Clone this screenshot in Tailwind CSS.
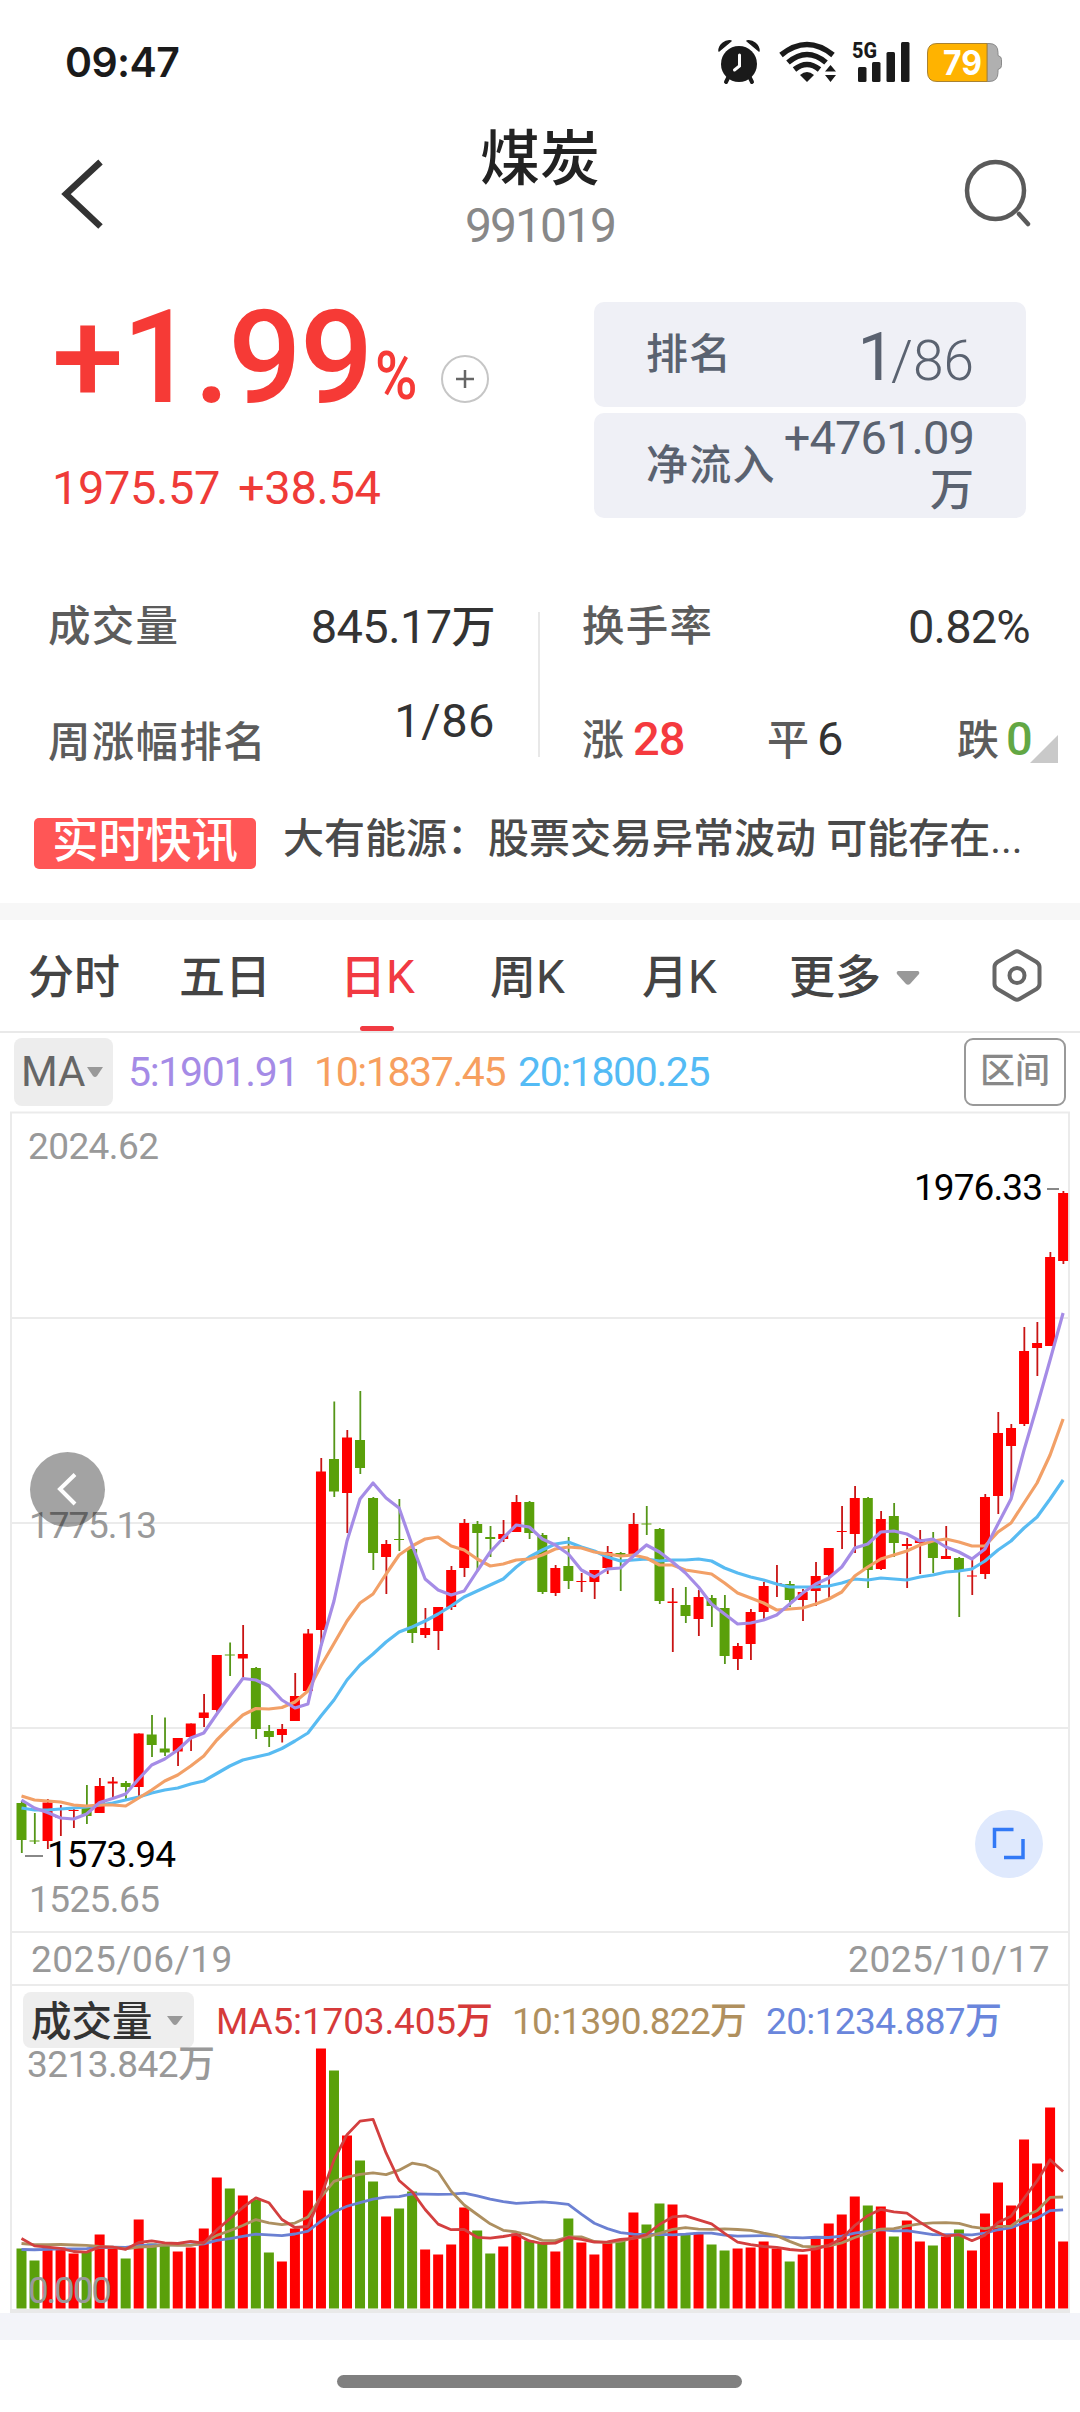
<!DOCTYPE html>
<html lang="zh-CN">

<head>
    <meta charset="UTF-8">
    <meta name="viewport" content="width=device-width, initial-scale=1.0">
    <title>煤炭 991019</title>
    <script src="https://cdn.jsdelivr.net/npm/@tailwindcss/browser@4"></script>
</head>

<body class="w-[1080px] h-[2412px] overflow-hidden bg-white font-['Roboto','Noto_Sans_CJK_SC',sans-serif] font-[450] text-[#333] whitespace-nowrap">
    <!-- status bar -->
    <div class="flex justify-between h-[120px] pl-[65px] pr-[70px] pt-[32px]">
        <span class="font-['Inter',sans-serif] font-semibold text-[41px] leading-[60px] text-[#1a1a1a] tracking-[-0.6px]">09:47</span>
        <svg class="w-[295px] h-[60px]" viewBox="715 32 295 60" fill="#1a1a1a">
            <circle cx="739" cy="64" r="18" />
            <path d="M719 51c0-6 6-11 12-10zM759 51c0-6-6-11-12-10z" stroke="#1a1a1a" stroke-width="1.5" stroke-linejoin="round" />
            <path d="M729 76l-3 6M749 76l3 6" stroke="#1a1a1a" stroke-width="4" stroke-linecap="round" />
            <path d="M739.500 55v11l-5 4" fill="none" stroke="#fff" stroke-width="3" stroke-linecap="round" />
            <g fill="none" stroke="#1a1a1a" stroke-width="5.500">
                <path d="M781 55q26-21 52 0" />
                <path d="M788 62.500q19-16 38 0" />
                <path d="M794.500 69.500q12.500-10 25 0" />
            </g>
            <path d="M800 75q7-6 14 0l-7 7z" />
            <path d="M825 71.500h11l-5.500-6.500zM825 75h11l-5.500 7z" />
            <text x="852" y="58" class="font-['Roboto']" font-size="22" font-weight="800" textLength="25" lengthAdjust="spacingAndGlyphs">5G</text>
            <rect x="858" y="67" width="8.500" height="15" rx="1.500" />
            <rect x="872" y="62" width="8.500" height="20" rx="1.500" />
            <rect x="886.500" y="52" width="8.500" height="30" rx="1.500" />
            <rect x="901" y="42" width="8.500" height="40" rx="1.500" />
            <path d="M987 43.500h2q9 0 9 9v3q3.500 1 3.500 4v6q0 3-3.500 4v3q0 9-9 9h-2z" fill="#b0b0b0" stroke="#8a8a8a" stroke-width="1" />
            <path d="M987 43.500h-50q-9.500 0-9.500 9.500v19q0 9.500 9.500 9.500h50z" fill="#ffb300" stroke="#a98232" stroke-width="1" />
            <text x="943" y="74.500" class="font-['Inter']" fill="#fff" font-size="34" font-weight="700" textLength="39" lengthAdjust="spacingAndGlyphs">79</text>
        </svg>
    </div>

    <!-- title -->
    <header class="flex justify-between h-[150px] pl-[60px] pr-[48px]">
        <svg class="w-[50px] h-[80px] mt-[34px]" viewBox="60 154 50 80" fill="none" stroke="#333" stroke-width="6.500">
            <path d="M100.500 162L66 194l34.500 32.500" />
        </svg>
        <div class="flex flex-col items-center pl-[8px]">
            <h1 class="mt-[7px] text-[60px] leading-[66px] font-medium text-[#222]">煤炭</h1>
            <span class="mt-[8px] text-[48px] leading-[50px] text-[#888] tracking-[-2px]">991019</span>
        </div>
        <svg class="w-[70px] h-[80px] mt-[34px]" viewBox="962 154 70 80" fill="none" stroke="#5a5a5a" stroke-width="4.500">
            <circle cx="995.500" cy="190.500" r="28.500" />
            <path d="M1019 214l9 10" stroke-linecap="round" />
        </svg>
    </header>

    <!-- quote -->
    <section class="flex justify-between h-[310px] pl-[52px] pr-[54px] pt-[32px]">
        <div>
            <div class="flex h-[106px] text-[#f63a36]">
                <span class="w-[321px] text-[129px] leading-[112px] font-medium tracking-[-1.5px]">+1.99</span>
                <span class="w-[54px] ml-[2px] text-[67px] leading-[148px] font-medium origin-left scale-x-[0.86]">%</span>
                <svg class="w-[50px] h-[50px] mt-[52px] ml-[11px]" viewBox="440 354 50 50" fill="none">
                    <circle cx="465" cy="379" r="23" stroke="#c6c6c6" stroke-width="2" />
                    <path d="M456 379h18M465 370v18" stroke="#666" stroke-width="2.500" />
                </svg>
            </div>
            <div class="mt-[55px] text-[47px] leading-[50px] text-[#ef3b38] tracking-[-0.4px] word-spacing-[6px]">1975.57<span class="ml-[18px]">+38.54</span></div>
        </div>
        <div class="flex flex-col gap-[6px] w-[432px] text-[#5a6270]">
            <div class="flex justify-between h-[105px] pl-[52px] pr-[52px] rounded-[10px] bg-[#eff0f6]">
                <span class="text-[42px] leading-[105px] tracking-[1px]">排名</span>
                <span class="flex"><b class="text-[67px] leading-[110px] font-normal tracking-[-4px]">1</b><i class="not-italic text-[55px] leading-[118px] font-light">/86</i></span>
            </div>
            <div class="flex justify-between h-[105px] pl-[52px] pr-[52px] rounded-[10px] bg-[#eff0f6]">
                <span class="text-[42px] leading-[105px] tracking-[1.2px]">净流入</span>
                <span class="text-[47px] leading-[50px] tracking-[-0.9px] text-right">+4761.09<br><span class="text-[44px] leading-[56px] tracking-normal">万</span></span>
            </div>
        </div>
    </section>

    <!-- stats -->
    <section class="flex h-[220px] pt-[20px] pl-[48px]">
        <div class="w-[490px] pr-[43px]">
            <div class="flex justify-between h-[50px] mt-[2px]">
                <span class="text-[42.500px] leading-[50px] tracking-[1.3px] text-[#5c5c5c]">成交量</span>
                <span class="text-[47px] leading-[50px] tracking-[-0.6px]">845.17<span class="text-[44px]">万</span></span>
            </div>
            <div class="flex justify-between h-[70px] mt-[44px]">
                <span class="mt-[22px] text-[42.500px] leading-[50px] tracking-[1.3px] text-[#5c5c5c]">周涨幅排名</span>
                <span class="text-[47px] leading-[50px] tracking-[0.5px]">1/86</span>
            </div>
        </div>
        <div class="w-[2px] h-[145px] mt-[12px] bg-[#e8e8e8]"></div>
        <div class="w-[518px] pl-[42px]">
            <div class="flex justify-between h-[50px] mt-[2px] pr-[28px]">
                <span class="text-[42.500px] leading-[50px] tracking-[1.3px] text-[#5c5c5c]">换手率</span>
                <span class="text-[47px] leading-[50px] tracking-[-0.8px]">0.82%</span>
            </div>
            <div class="flex h-[50px] mt-[62px] text-[42px] leading-[50px] text-[#5c5c5c]">
                <span class="w-[185px]">涨<b class="ml-[9px] text-[47px] font-medium tracking-[-1px] text-[#f53a3e]">28</b></span>
                <span class="w-[190px]">平<b class="ml-[8px] text-[47px] font-[450] text-[#333]">6</b></span>
                <span class="w-[73px]">跌<b class="ml-[7px] text-[47px] font-medium text-[#62a744]">0</b></span>
                <svg class="w-[28px] h-[28px] mt-[21px]" viewBox="0 0 28 28"><path d="M28 0v28H0z" fill="#c9c9c9" /></svg>
            </div>
        </div>
    </section>

    <!-- news -->
    <section class="flex h-[103px] pl-[34px] pt-[18px]">
        <span class="w-[222px] h-[51px] rounded-[5px] bg-[#ff5656] text-white text-center text-[46.500px] leading-[47px]">实时快讯</span>
        <span class="ml-[27px] text-[41px] leading-[42px] text-[#4a4a4a]">大有能源：股票交易异常波动 可能存在...</span>
    </section>
    <div class="h-[17px] bg-[#f7f7f7]"></div>

    <!-- period tabs -->
    <nav class="flex h-[113px] pl-[28px] border-b-2 border-[#e9e9e9] text-[46px] leading-[115px] text-[#444]">
        <span class="w-[151px]">分时</span>
        <span class="w-[161px]">五日</span>
        <span class="w-[150px] flex flex-col text-[#f13a42]">
            <span class="h-[106px]">日K</span>
            <span class="w-[34px] h-[5px] ml-[20px] rounded-[3px] bg-[#f13a42]"></span>
        </span>
        <span class="w-[152px]">周K</span>
        <span class="w-[147px]">月K</span>
        <span class="w-[107px]">更多</span>
        <svg class="w-[24px] h-[14px] mt-[51px]" viewBox="0 0 24 14"><path d="M2 0h20q2 1 1 3l-9 10q-2 1.500-4 0L1 3q-1-2 1-3z" fill="#999" /></svg>
        <svg class="w-[54px] h-[60px] mt-[26px] ml-[70px]" viewBox="0 0 54 60" fill="none" stroke="#666" stroke-width="4">
            <path d="M24.500 6q2.500-1.500 5 0l17 10q3 2 3 5v17q0 3-3 5l-17 10q-2.500 1.500-5 0l-17-10q-3-2-3-5V21q0-3 3-5z" />
            <circle cx="27" cy="29.500" r="7.500" />
        </svg>
    </nav>

    <!-- MA legend -->
    <div class="flex h-[78px] pl-[14px] pt-[5px] text-[41px] leading-[68px]">
        <div class="flex w-[99px] h-[68px] pl-[7px] rounded-[8px] bg-[#ededed] text-[42px] text-[#666]">MA
            <svg class="w-[16px] h-[11px] mt-[29px] ml-[2px]" viewBox="0 0 16 11"><path d="M0 0h16l-6 9q-2 2-4 0z" fill="#999" /></svg>
        </div>
        <span class="w-[186px] ml-[15px] tracking-[-1.3px] text-[#a58be6]">5:1901.91</span>
        <span class="w-[204px] tracking-[-1.4px] text-[#f79f5f]">10:1837.45</span>
        <span class="w-[446px] tracking-[-1.4px] text-[#54bbf5]">20:1800.25</span>
        <span class="w-[102px] h-[68px] border-2 border-[#999] rounded-[9px] text-center text-[35px] leading-[64px] text-[#888]">区间</span>
    </div>

    <!-- candles -->
    <div class="h-[820px]">
        <svg class="w-[1080px] h-[820px]" viewBox="0 1111 1080 820">
            <path d="M11 1931V1112.500H1069V1931M11 1318H1069M11 1523H1069M11 1728H1069" fill="none" stroke="#ebebeb" stroke-width="2" />
            <g id="candles"></g>
            <g fill="none" stroke-width="3.200" stroke-linejoin="round">
                <polyline id="ma20" stroke="#58bbf2" />
                <polyline id="ma10" stroke="#f2a067" />
                <polyline id="ma5" stroke="#a58ce6" />
            </g>
            <g font-size="37" fill="#999">
                <text x="28" y="1159" textLength="131">2024.62</text>
                <text x="29" y="1537.500" textLength="128">1775.13</text>
                <text x="29" y="1912" textLength="131">1525.65</text>
            </g>
            <g font-size="37" fill="#000">
                <text x="914" y="1200" textLength="129">1976.33</text>
                <text x="47" y="1867" textLength="129">1573.94</text>
            </g>
            <path d="M1047 1189h12M25 1856h18" stroke="#888" stroke-width="2" />
            <circle cx="67.500" cy="1489.500" r="37.500" fill="#000" fill-opacity="0.36" />
            <path d="M75 1474.500l-15 14.500 15 15" fill="none" stroke="#fff" stroke-width="4" />
            <circle cx="1009" cy="1844" r="34" fill="#dfe9fd" />
            <path d="M994.500 1848v-18.500h19M1023 1839v18.500h-19" fill="none" stroke="#3279f6" stroke-width="3.500" />
        </svg>
    </div>

    <!-- date range -->
    <div class="flex justify-between h-[55px] mx-[10px] pl-[19px] pr-[18px] border-2 border-[#ebebeb] text-[37px] leading-[53px] text-[#999] tracking-[0.5px]">
        <span>2025/06/19</span>
        <span>2025/10/17</span>
    </div>

    <!-- volume -->
    <div class="h-[327px]">
        <svg class="w-[1080px] h-[327px]" viewBox="0 1986 1080 327">
            <path d="M11 1986V2312M1069 1986V2312" stroke="#ebebeb" stroke-width="2" />
            <path d="M10 2311H1070" stroke="#e9e9e9" stroke-width="4" />
            <rect x="23" y="1992" width="171" height="56" rx="8" fill="#eee" />
            <text x="31" y="2036" font-size="40.500" fill="#333">成交量</text>
            <path d="M167 2016h16l-6 8q-2 2-4 0z" fill="#999" />
            <g font-size="37">
                <text x="216" y="2034" fill="#d63a3a" textLength="277">MA5:1703.405万</text>
                <text x="512" y="2034" fill="#b0905e" textLength="235">10:1390.822万</text>
                <text x="766" y="2034" fill="#6a86dc" textLength="236">20:1234.887万</text>
            </g>
            <text x="27" y="2077" font-size="37" fill="#999" textLength="188">3213.842万</text>
            <g id="volumes"></g>
            <g fill="none" stroke-width="2.800" stroke-linejoin="round">
                <polyline id="vma20" stroke="#6b80d2" />
                <polyline id="vma10" stroke="#ad8f60" />
                <polyline id="vma5" stroke="#d33f3f" />
            </g>
            <text x="28" y="2303" font-size="37" fill="#999" textLength="84">0.000</text>
        </svg>
    </div>
    <div class="h-[27px] bg-[#f3f4f9]"></div>
    <div class="w-[405px] h-[13px] mt-[35px] ml-[337px] rounded-full bg-[#808080]"></div>

    <script>
        // [high, body top, body bottom, low, up]
        const candles = [
            [1801,1803,1840,1853,0],[1813,1840.5,1841.5,1844,0],[1799,1802.5,1841,1849,1],[1805,1817,1818,1836,1],[1809,1810,1811,1828,1],
            [1785,1807.5,1816,1824,0],[1778,1786,1813,1813,1],[1777,1781.5,1783.5,1798,1],[1781,1783,1787,1799,0],[1733.5,1733.5,1787,1796,1],
            [1715,1734.5,1745,1757,0],[1717.5,1748.5,1752.5,1756,0],[1738,1738,1751.5,1766,1],[1723.5,1723.5,1737,1751,1],[1694,1712.5,1718,1727,1],
            [1655,1655,1710,1712,1],[1642.5,1654.5,1655.5,1676,0],[1625,1654,1658.5,1678,1],[1667,1668,1729,1739,0],[1725,1731,1737,1747,0],
            [1724,1729,1735,1742.5,1],[1673,1696,1721,1721,1],[1629,1633.5,1691,1691,1],[1458,1471.5,1630,1646,1],[1401.5,1459,1491.5,1497,0],
            [1430,1437.5,1493,1533,1],[1391,1440,1468,1474,0],[1497,1498,1553,1570,0],[1540,1544,1557,1594,1],[1499,1539,1540,1551,0],
            [1548,1549,1633,1643,0],[1608,1628,1635,1638,1],[1607,1607,1631,1650,1],[1566,1570,1607,1610,1],[1519,1523,1568,1577,1],
            [1521,1524,1533,1570,0],[1526,1537,1539,1557,0],[1520,1534,1539,1542,1],[1495,1502,1532,1532,1],[1501,1502,1533,1539,0],
            [1533,1535,1592,1594,0],[1565,1568,1593,1596,1],[1537,1566,1581,1589,0],[1573,1581,1582,1592,1],[1570,1570,1582,1599,1],
            [1546,1552,1568,1574,1],[1552,1553,1555,1591,0],[1513,1524,1554,1554,1],[1506,1523.5,1524.5,1535,0],[1528,1529,1601,1604,0],
            [1588,1601.5,1603,1652,1],[1587,1605,1616,1623,0],[1590,1597,1619,1636,1],[1595,1598,1606,1627,0],[1595,1608,1656,1664,0],
            [1643,1646,1659,1670,1],[1609,1612,1644,1660,1],[1582,1586,1612,1619,1],[1565,1583,1584,1597,1],[1581,1584,1600,1607,0],
            [1589,1592,1600,1621,1],[1562,1576,1591,1606,1],[1548,1548,1575,1599,1],[1506,1531,1532,1549,1],[1486,1498,1534,1553,1],
            [1497,1498,1570,1588,0],[1511,1519,1569,1570,1],[1503,1516,1543,1557,0],[1538,1544,1546,1588,1],[1530,1539,1543,1574,1],
            [1532,1541,1558,1573,0],[1526,1556,1559,1559,1],[1557,1558,1571,1617,0],[1560,1575.5,1576.5,1595,1],[1494,1497,1574,1579,1],
            [1412,1433,1496,1514,1],[1424,1428,1446,1498,1],[1327,1351,1424,1426,1],[1322,1343,1348,1376,1],[1252,1257,1346,1346,1],[1191,1193,1261,1264,1]
        ];
        const ma5 = [1800,1808,1812.5,1818,1819,1814,1802.5,1798.5,1794,1779,1765,1759,1750,1738,1733,1714,1696,1678.5,1680,1686,1700,1708,1704,1646,1601,1541,1499,1483,1498,1508,1545,1579,1590,1595,1591,1571,1552,1538,1525,1527,1539,1545,1554,1570,1577,1569,1568,1556,1545,1552,1562,1573,1587,1604,1614,1624,1623,1620,1615,1604,1593,1584,1578,1567,1548,1544,1532,1531,1534,1541,1539,1547,1552,1559,1549,1524,1499,1450,1406,1360,1313];
        const ma10 = [1796,1800,1801,1802,1805,1806,1805,1805,1806,1798,1790,1781,1775,1766,1756,1740,1727,1715,1708.5,1709,1707.5,1702,1691,1666,1643.5,1621,1603,1594,1574,1555,1546,1539,1537,1546,1550,1559,1566,1564,1560,1559,1555,1549,1547,1548,1552,1554,1556,1555,1558,1565,1565,1570,1572,1574,1583,1593,1598,1603,1610,1609,1608,1604,1599,1592,1576,1567,1559,1555,1551,1545,1541,1539,1542,1546,1546,1532,1523,1503,1483,1455,1419];
        const ma20 = [1808,1810,1810,1809,1808,1807,1805,1803,1800,1797,1793,1790,1788,1784,1781,1773.5,1766,1760,1757,1754,1748.5,1741,1733,1716,1700,1680,1665,1654,1642,1632,1627,1621,1614,1606,1597,1591,1585,1579,1567,1557,1550,1544,1542,1547,1551,1557,1561,1560,1559,1561,1560,1560,1559,1561,1568,1573,1577,1580,1584,1587,1587,1587,1586,1583,1579,1580,1578,1579,1580,1577,1575,1572,1571,1569,1561,1550,1541,1528,1517,1499,1480];
        const volumes = [60,48,61,61,55,57,74,60,50,89,65,64,57,61,80,131,120,113,109,56,47,80,118,260,238,173,148,127,92,100,117,59,54,64,101,78,55,62,75,68,65,57,90,66,54,66,69,96,84,105,104,74,76,64,58,60,61,67,60,47,54,70,85,94,112,103,102,72,88,67,63,72,79,58,95,126,103,169,145,201,67];
        // volume of the 19 days before the first visible one
        const earlier = [53,53,53,53,53,53,53,53,53,53,60,60,60,60,60,85,67,67,71];

        const x = i => 21.5 + i * 13.02;
        const rect = (cx, top, bottom, w, color) =>
            `<rect x="${cx - w / 2}" y="${top}" width="${w}" height="${bottom - top}" fill="${color}"/>`;
        const line = (id, ys) =>
            document.getElementById(id).setAttribute('points', ys.map((y, i) => x(i) + ',' + y).join(' '));

        document.getElementById('candles').innerHTML = candles.map(([hi, top, bottom, lo, up], i) =>
            rect(x(i) + 0.3, hi, lo, 1.8, up ? '#c81414' : '#559618') +
            rect(x(i), top, bottom, 10, up ? '#ff0000' : '#5aa00a')).join('');
        line('ma5', ma5);
        line('ma10', ma10);
        line('ma20', ma20);

        document.getElementById('volumes').innerHTML = volumes.map((v, i) =>
            rect(x(i), 2308.5 - v, 2308.5, 10, candles[i][4] ? '#ff0000' : '#5aa00a')).join('');
        const all = earlier.concat(volumes);
        const average = n => volumes.map((_, i) =>
            2308.5 - all.slice(i + 20 - n, i + 20).reduce((a, b) => a + b) / n);
        line('vma5', average(5));
        line('vma10', average(10));
        line('vma20', average(20));
    </script>
</body>

</html>
